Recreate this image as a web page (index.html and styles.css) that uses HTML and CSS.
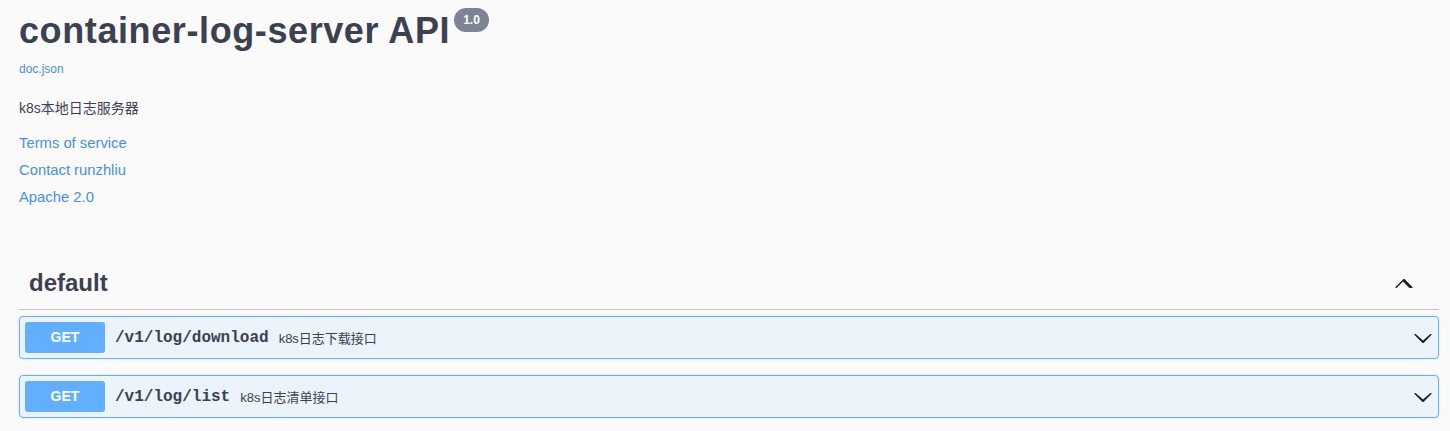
FILE: index.html
```html
<!DOCTYPE html>
<html>
<head>
<meta charset="utf-8">
<link rel="stylesheet" href="styles.css">
</head>
<body>
<div class="wrapper">
  <section class="info">
    <div class="title-row">
      <h2 class="title">container-log-server API</h2>
      <span class="version">1.0</span>
    </div>
    <a class="url" href="#">doc.json</a>
    <p class="desc">k8s本地日志服务器</p>
    <div class="links">
      <a href="#">Terms of service</a>
      <a href="#">Contact runzhliu</a>
      <a href="#">Apache 2.0</a>
    </div>
  </section>
  <section class="tag-section">
    <h3 class="tag">
      <span>default</span>
      <svg class="arrow-up" width="20" height="20" viewBox="0 0 20 20"><path d="M17.418 14.908c-.272.268-.709.268-.979 0L10 8.499l-6.439 6.409c-.271.268-.709.268-.979 0-.27-.268-.27-.701 0-.969l7.908-7.83c.27-.268.707-.268.979 0l7.908 7.83c.27.268.27.701.041.969z" fill="#1b1b1b"/></svg>
    </h3>
    <div class="op">
      <span class="method">GET</span>
      <span class="path">/v1/log/download</span>
      <span class="summary">k8s日志下载接口</span>
      <svg class="arrow" width="20" height="20" viewBox="0 0 20 20"><path d="M17.418 6.109c.272-.268.709-.268.979 0s.271.701 0 .969l-7.908 7.83c-.27.268-.707.268-.979 0l-7.908-7.83c-.27-.268-.27-.701 0-.969.271-.268.709-.268.979 0L10 12.509l7.418-6.4z" fill="#1b1b1b"/></svg>
    </div>
    <div class="op">
      <span class="method">GET</span>
      <span class="path">/v1/log/list</span>
      <span class="summary">k8s日志清单接口</span>
      <svg class="arrow" width="20" height="20" viewBox="0 0 20 20"><path d="M17.418 6.109c.272-.268.709-.268.979 0s.271.701 0 .969l-7.908 7.83c-.27.268-.707.268-.979 0l-7.908-7.83c-.27-.268-.27-.701 0-.969.271-.268.709-.268.979 0L10 12.509l7.418-6.4z" fill="#1b1b1b"/></svg>
    </div>
  </section>
</div>
</body>
</html>
```
FILE: styles.css
```css
html, body {
  margin: 0;
  padding: 0;
  background: #fafafa;
}
body {
  font-family: "Liberation Sans", "Noto Sans CJK SC", sans-serif;
  color: #3b4151;
}
.wrapper {
  padding: 0 11px 0 19px;
}
.info {
  display: flex;
  flex-direction: column;
  align-items: flex-start;
  padding-top: 9px;
}
.title-row {
  display: flex;
  align-items: flex-start;
}
.title {
  margin: 0;
  font-size: 36px;
  font-weight: 700;
  letter-spacing: 0.6px;
  line-height: 44px;
  color: #3b4151;
}
.version {
  margin: -1px 0 0 4px;
  background: #7d8492;
  color: #fff;
  font-size: 12px;
  font-weight: 700;
  height: 24px;
  line-height: 24px;
  padding: 0 9px;
  border-radius: 12px;
}
.url {
  margin-top: 8px;
  font-size: 12px;
  line-height: 16px;
  color: #4990e2;
  text-decoration: none;
}
.desc {
  margin: 22px 0 0;
  font-size: 14px;
  line-height: 18px;
}
.links {
  margin-top: 17px;
  display: flex;
  flex-direction: column;
  gap: 9px;
}
.links a {
  font-size: 14.8px;
  line-height: 18px;
  color: #4990e2;
  text-decoration: none;
}
.tag-section {
  margin-top: 51px;
}
.tag {
  margin: 0 0 6px;
  display: flex;
  align-items: center;
  justify-content: space-between;
  padding: 10px 26px 10px 10px;
  border-bottom: 1px solid #c4c6cb;
  font-size: 24px;
  font-weight: 600;
  line-height: 32px;
}
.op {
  display: flex;
  align-items: center;
  height: 41px;
  padding: 0 5px;
  margin-bottom: 16px;
  border: 1px solid #61affe;
  border-radius: 4px;
  background: #ebf3fb;
  box-shadow: 0 0 3px rgba(0, 0, 0, 0.1);
}
.method {
  min-width: 80px;
  height: 31px;
  line-height: 31px;
  text-align: center;
  background: #61affe;
  color: #fff;
  border-radius: 3px;
  font-size: 14px;
  font-weight: 700;
}
.path {
  padding: 0 10px;
  font-family: "Liberation Mono", monospace;
  font-size: 16px;
  font-weight: 700;
  color: #3b4151;
}
.summary {
  flex: 1;
  font-size: 13px;
  color: #3b4151;
}
```
